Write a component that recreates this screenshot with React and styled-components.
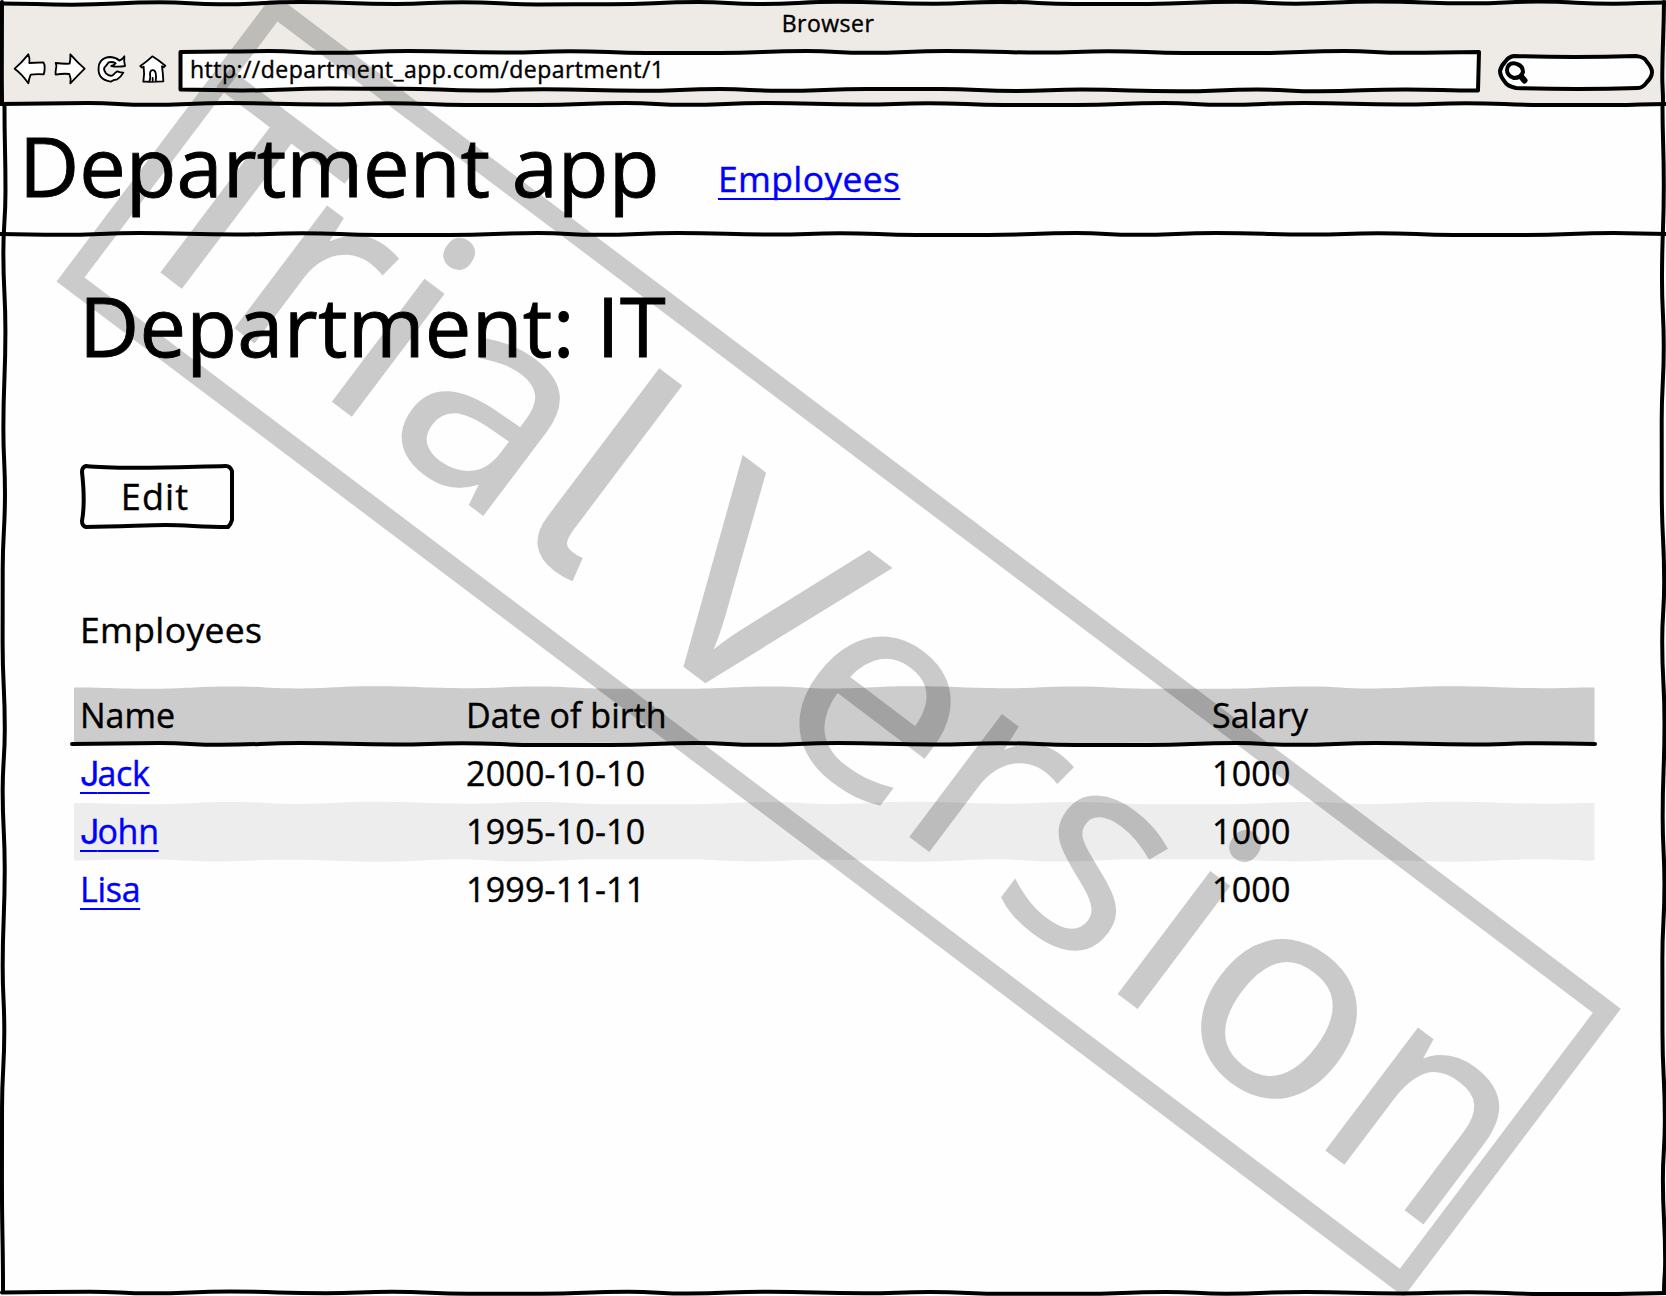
import React from "react";
import styled, { createGlobalStyle, css } from "styled-components";

const INK = "#000";
const PAPER = "#fefefe";
const CHROME = "#eeebe6";
const LINK = "#0000ff";

const GlobalStyle = createGlobalStyle`
  *, *::before, *::after { box-sizing: border-box; }
  body { margin: 0; background: ${PAPER}; }
`;

/* ---------- hand-drawn line helpers ---------- */

const STEPS = [72, 88, 60, 80, 96, 66, 76];
const SWINGS = [1, -0.9, 0.8, -1, 0.6, -0.8, 1];

// Segments of a gently wavering stroke from one point to another.
function waver(x0, y0, x1, y1, { amp = 1.2, seed = 0, move = true } = {}) {
  const length = Math.hypot(x1 - x0, y1 - y0);
  const ux = (x1 - x0) / length;
  const uy = (y1 - y0) / length;
  let at = 0;
  let off = 0;
  let i = seed;
  let d = move ? `M${x0} ${y0}` : `L${x0} ${y0}`;
  while (at < length) {
    let next = at + STEPS[i % STEPS.length];
    let nextOff = SWINGS[i % SWINGS.length] * amp;
    if (next > length - 30) {
      next = length;
      nextOff = 0;
    }
    const half = (next - at) / 2;
    const p = (t, o) =>
      `${(x0 + ux * t - uy * o).toFixed(2)} ${(y0 + uy * t + ux * o).toFixed(2)}`;
    d += `C${p(at + half, off)} ${p(next - half, nextOff)} ${p(next, nextOff)}`;
    at = next;
    off = nextOff;
    i += 1;
  }
  return d;
}

function band(x0, y0, x1, y1, seed) {
  return (
    waver(x0, y0, x1, y0, { seed }) +
    waver(x1, y0, x1, y1, { amp: 0.6, seed: 1, move: false }) +
    waver(x1, y1, x0, y1, { seed: seed + 2, move: false }) +
    "Z"
  );
}

const Drawing = styled.svg`
  position: absolute;
  inset: 0;
  width: 100%;
  height: 100%;
  overflow: visible;
  pointer-events: none;
  z-index: ${(p) => (p.$behind ? 0 : 1)};
`;

const Stroke = styled.path`
  fill: ${(p) => p.$fill || "none"};
  stroke: ${INK};
  stroke-width: ${(p) => p.$width || 4};
  stroke-linejoin: round;
  stroke-linecap: round;
`;

/* ---------- window ---------- */

const Window = styled.div`
  position: relative;
  display: flex;
  flex-direction: column;
  width: 1666px;
  height: 1296px;
  overflow: hidden;
  background: ${PAPER};
  color: ${INK};
  font-family: "Open Sans", "Noto Sans", sans-serif;
  -webkit-text-stroke: 0.4px currentColor;
`;

const Chrome = styled.div`
  height: 104px;
  border-top: 3px solid ${PAPER};
  background: ${CHROME};
`;

const WindowTitle = styled.div`
  height: 43px;
  padding: 0 12px 0 2px;
  line-height: 41px;
  font-size: 23px;
  letter-spacing: 0.5px;
  text-align: center;
`;

const Toolbar = styled.div`
  display: flex;
  align-items: flex-start;
  padding: 4px 12px 0;
`;

const NavIcons = styled.div`
  display: flex;
  gap: 4px;
  margin-top: 2px;
`;

const NavIcon = styled.svg`
  display: block;
  width: 36px;
  height: 34px;
  fill: #fff;
  stroke: ${INK};
  stroke-width: 5.5;
  stroke-linejoin: round;
  stroke-linecap: round;
`;

const AddressBar = styled.div`
  position: relative;
  flex: 1;
  height: 42px;
  margin: 0 16px 0 11px;
  padding-left: 11px;
  font-size: 23px;
  line-height: 39px;
  letter-spacing: 0.47px;
`;

const AddressText = styled.span`
  position: relative;
  z-index: 1;
`;

const SearchBox = styled.div`
  position: relative;
  width: 156px;
  height: 36px;
  margin-top: 4px;
`;

/* ---------- page ---------- */

const AppHeader = styled.header`
  display: flex;
  align-items: flex-start;
  height: 130px;
  padding-left: 19px;
`;

const AppName = styled.div`
  width: 699px;
  font-size: 83px;
  line-height: 122px;
  -webkit-text-stroke-width: 0.9px;
`;

const Link = styled.a`
  color: ${LINK};
  text-decoration: underline;
  text-decoration-thickness: 2px;
  text-underline-offset: 6px;
  text-decoration-skip-ink: none;
`;

const HeaderLink = styled(Link)`
  margin-top: 13px;
  font-size: 35.5px;
  line-height: 122px;
  letter-spacing: 0.35px;
`;

const Main = styled.main`
  display: flex;
  flex-direction: column;
  align-items: flex-start;
  padding: 41px 71px 0 74px;
`;

const PageTitle = styled.h1`
  margin: 0;
  padding-left: 5px;
  font-weight: 400;
  font-size: 83px;
  line-height: 100px;
  letter-spacing: 0.25px;
  -webkit-text-stroke-width: 0.9px;
`;

const SketchButton = styled.button`
  position: relative;
  width: 154px;
  height: 65px;
  margin: 89px 0 0 6px;
  padding: 1px 4px 0 0;
  border: 0;
  background: transparent;
  color: inherit;
  font: inherit;
  font-size: 36px;
  line-height: 64px;
  letter-spacing: 1.1px;
`;

const SectionLabel = styled.h2`
  margin: 76px 0 0 6px;
  font-weight: 400;
  font-size: 35.5px;
  line-height: 48px;
  letter-spacing: 0.35px;
`;

const Table = styled.div`
  position: relative;
  width: 1521px;
  margin-top: 33px;
`;

const Row = styled.div`
  position: relative;
  z-index: 1;
  display: grid;
  grid-template-columns: 386px 746px 1fr;
  height: 58px;
  padding-left: 6px;
  font-size: 34px;
  line-height: ${(p) => (p.$head ? 58 : 59)}px;
  letter-spacing: ${(p) => (p.$head ? 0 : 0.2)}px;
`;

const PersonLink = styled(Link)`
  display: inline-block;
  letter-spacing: -0.3px;
  ${(p) =>
    p.$hookedJ &&
    css`
      &::first-letter {
        font-family: Inter, "Open Sans", sans-serif;
        letter-spacing: -2px;
      }
    `}
`;

/* ---------- watermark ---------- */

const Watermark = styled.svg`
  position: absolute;
  inset: 0;
  z-index: 2;
  width: 1666px;
  height: 1296px;
  overflow: visible;
  pointer-events: none;

  rect {
    fill: none;
    stroke: #000;
    stroke-opacity: 0.2;
    stroke-width: 20;
  }
`;

const Stamp = styled.text`
  fill: #000;
  opacity: 0.2;
  font-family: ${(p) => (p.$tailed ? "Inter" : '"Open Sans"')}, "Noto Sans", sans-serif;
  font-size: ${(p) => (p.$tailed ? 305 : 284)}px;
  font-feature-settings: ${(p) => (p.$tailed ? '"cv05" 1' : "normal")};
  stroke: #000;
  stroke-width: 2px;
  -webkit-text-stroke: 2px #000;
`;

// [letter, x, horizontal stretch]
const LETTERS = [
  ["T", -1, 1.05],
  ["r", 137, 1],
  ["i", 259, 1],
  ["a", 339, 0.98],
  ["l", 501, 1],
  ["V", 644, 1.09],
  ["e", 819, 1.04],
  ["r", 982, 1],
  ["s", 1102, 0.97],
  ["i", 1243, 1],
  ["o", 1322, 1.03],
  ["n", 1504, 0.955],
];

const EMPLOYEES = [
  { name: "Jack", birth: "2000-10-10", salary: "1000" },
  { name: "John", birth: "1995-10-10", salary: "1000" },
  { name: "Lisa", birth: "1999-11-11", salary: "1000" },
];

function NavigationIcons() {
  return (
    <NavIcons>
      <NavIcon viewBox="36 66 108 102">
        <path d="M44 116Q64 99 85 73Q90 84 88 99Q110 98 130 97Q135 104 134 115Q134 126 131 133Q110 131 92 134Q87 146 85 160Q66 132 44 116Z" />
      </NavIcon>
      <NavIcon viewBox="156 66 108 102">
        <path d="M254 116Q234 99 211 73Q212 86 209 101Q188 102 167 99Q171 108 168 116Q166 126 167 134Q188 130 208 132Q214 146 211 160Q232 138 254 116Z" />
      </NavIcon>
      <NavIcon viewBox="276 66 108 102">
        <path d="M302 94Q312 81 332 81Q348 82 358 92Q368 88 373 79Q371 94 375 108Q352 112 334 108Q343 106 347 100Q338 94 326 97Q320 106 313 113Q310 120 318 130Q328 140 338 136Q346 128 352 124Q362 128 370 128Q362 142 352 148Q340 149 332 155Q312 152 302 140Q294 128 296 112Q296 102 302 94Z" />
      </NavIcon>
      <NavIcon viewBox="396 66 108 102">
        <path d="M421 108Q440 95 457 79Q475 90 496 107L491 112L486 109Q489 130 490 154Q460 156 430 155Q434 130 431 110L426 113Z" />
        <path d="M449 154Q452 140 450 130Q452 118 462 121Q471 126 467 154M458 154V144" />
      </NavIcon>
    </NavIcons>
  );
}

function WindowOutline() {
  return (
    <Drawing viewBox="0 0 1666 1296">
      <Stroke d={waver(0, 3.5, 1666, 2.5, { amp: 1.2, seed: 0 })} />
      <Stroke d={waver(2, 2, 2, 104, { amp: 0.2 })} />
      <Stroke d={waver(1664, 2, 1663, 104, { amp: 1, seed: 0 })} />
      <Stroke d={waver(0, 104, 1666, 104, { amp: 1, seed: 1 })} />
      <Stroke d={waver(0, 234, 1666, 234, { amp: 1, seed: 2 })} />
      <Stroke d={waver(4.5, 104, 3, 1292, { amp: 1.2, seed: 1 })} />
      <Stroke d={waver(1662.5, 104, 1664, 1293, { amp: 1.2, seed: 3 })} />
      <Stroke d={waver(2, 1292.5, 1666, 1293, { amp: 1, seed: 1 })} />
    </Drawing>
  );
}

function TableShapes() {
  return (
    <Drawing $behind viewBox="0 0 1521 232">
      <path d={band(0, 1.5, 1520.5, 58, 0)} fill="#cccccc" />
      <path d={band(0, 117, 1520.5, 174.5, 0)} fill="#ededed" />
      <Stroke d={waver(-2, 58, 1521, 58, { amp: 1, seed: 1 })} />
    </Drawing>
  );
}

export default function App() {
  return (
    <>
      <GlobalStyle />
      <Window>
        <Chrome>
          <WindowTitle>Browser</WindowTitle>
          <Toolbar>
            <NavigationIcons />
            <AddressBar>
              <Drawing $behind viewBox="0 0 1303 42">
                <Stroke
                  $fill={PAPER}
                  d={
                    waver(1.5, 2, 1300, 2, { amp: 1, seed: 1 }) +
                    waver(1300, 2, 1299, 40.5, { amp: 0.5, move: false }) +
                    waver(1299, 40.5, 1.5, 39.5, { amp: 1, move: false }) +
                    "Z"
                  }
                />
              </Drawing>
              <AddressText>http://department_app.com/department/1</AddressText>
            </AddressBar>
            <SearchBox>
              <Drawing viewBox="0 0 156 36">
                <Stroke
                  $fill={PAPER}
                  d="M16 2Q76 4 138 2Q147 3 149 8Q154 14 154 18Q154 23 149 28Q145 34 140 34Q80 36 18 34Q9 32 7 28Q2 22 2 17Q3 12 7 8Q10 3 16 2Z"
                />
                <Stroke d="M11 11Q14 8 19 10Q25 12 25 18Q23 24 16 24Q9 22 9 16Q9 13 11 11Z" />
                <Stroke $width={6} d="M23.5 23L26.5 26.5" />
              </Drawing>
            </SearchBox>
          </Toolbar>
        </Chrome>

        <AppHeader>
          <AppName>Department app</AppName>
          <HeaderLink>Employees</HeaderLink>
        </AppHeader>

        <Main>
          <PageTitle>Department: IT</PageTitle>
          <SketchButton>
            <Drawing viewBox="0 0 154 65">
              <Stroke d="M6 2C40 6 100 3 146 2Q150 2 152 7V56Q151 60 148 63C120 63 108 61 86 61C64 61 40 63 6 63Q2 62 2 57C4 46 4 26 2 8Q2 3 6 2Z" />
            </Drawing>
            Edit
          </SketchButton>
          <SectionLabel>Employees</SectionLabel>
          <Table>
            <TableShapes />
            <Row $head>
              <span>Name</span>
              <span>Date of birth</span>
              <span>Salary</span>
            </Row>
            {EMPLOYEES.map((person) => (
              <Row key={person.name}>
                <span>
                  <PersonLink $hookedJ={person.name.startsWith("J")}>{person.name}</PersonLink>
                </span>
                <span>{person.birth}</span>
                <span>{person.salary}</span>
              </Row>
            ))}
          </Table>
        </Main>

        <WindowOutline />

        <Watermark viewBox="0 0 1666 1296">
          <g transform="translate(275.5 7.5) rotate(37)">
            <rect x="0" y="0" width="1667" height="340.6" />
            {LETTERS.map(([letter, x, stretch]) => (
              <Stamp
                key={x}
                $tailed={letter === "l"}
                transform={`translate(${x} 280) scale(${stretch} 1)`}
              >
                {letter}
              </Stamp>
            ))}
          </g>
        </Watermark>
      </Window>
    </>
  );
}
